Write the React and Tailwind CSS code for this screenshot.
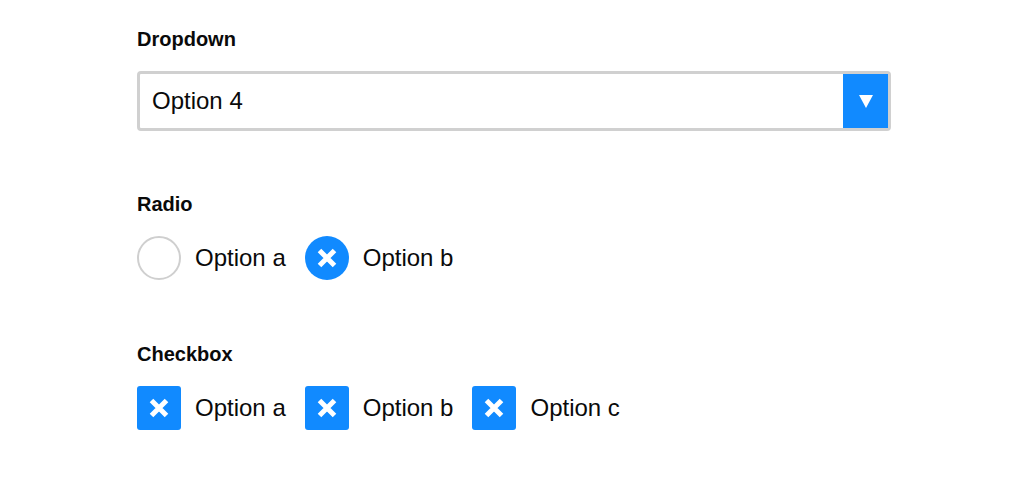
import React from 'react';

const Cross = () => (
  <svg width="20" height="20" viewBox="0 0 20 20">
    <path d="M2.5 2.5 L17.5 17.5 M17.5 2.5 L2.5 17.5" stroke="#fff" strokeWidth="5" strokeLinecap="butt" />
  </svg>
);

const Label = ({ children }) => (
  <div className="h-6 text-[20px] leading-6 font-bold text-[#0a0a0a]">{children}</div>
);

const Option = ({ checked, round, children }) => (
  <label className="flex items-center gap-[14px] mr-[19px]">
    {checked ? (
      <span
        className={`w-11 h-11 flex items-center justify-center bg-[#118aff] ${round ? 'rounded-full' : 'rounded-[3px]'}`}
      >
        <Cross />
      </span>
    ) : (
      <span
        className={`w-11 h-11 border-2 border-[#cfcfcf] bg-white ${round ? 'rounded-full' : 'rounded-[3px]'}`}
      />
    )}
    <span className="text-[24px] text-[#0a0a0a]">{children}</span>
  </label>
);

export default function App() {
  const [radio] = React.useState('b');

  return (
    <div className="min-h-[480px] bg-white pt-[27px] pl-[137px]" style={{ fontFamily: '"Liberation Sans", Arial, sans-serif' }}>
      <div className="w-[754px]">
        <Label>Dropdown</Label>
        <div className="mt-5 h-[60px] flex border-[3px] border-[#d0d0d0] rounded-[4px] bg-white">
          <div className="flex-1 flex items-center pl-3 text-[24px] text-[#0a0a0a]">Option 4</div>
          <div className="w-[45px] bg-[#118aff] flex items-center justify-center">
            <svg width="14" height="13" viewBox="0 0 14 13">
              <path d="M0 0 H14 L7 13 Z" fill="#fff" />
            </svg>
          </div>
        </div>

        <div className="mt-[61px]">
          <Label>Radio</Label>
          <div className="mt-5 flex">
            <Option round checked={radio === 'a'}>Option a</Option>
            <Option round checked={radio === 'b'}>Option b</Option>
          </div>
        </div>

        <div className="mt-[62px]">
          <Label>Checkbox</Label>
          <div className="mt-5 flex">
            <Option checked>Option a</Option>
            <Option checked>Option b</Option>
            <Option checked>Option c</Option>
          </div>
        </div>
      </div>
    </div>
  );
}
